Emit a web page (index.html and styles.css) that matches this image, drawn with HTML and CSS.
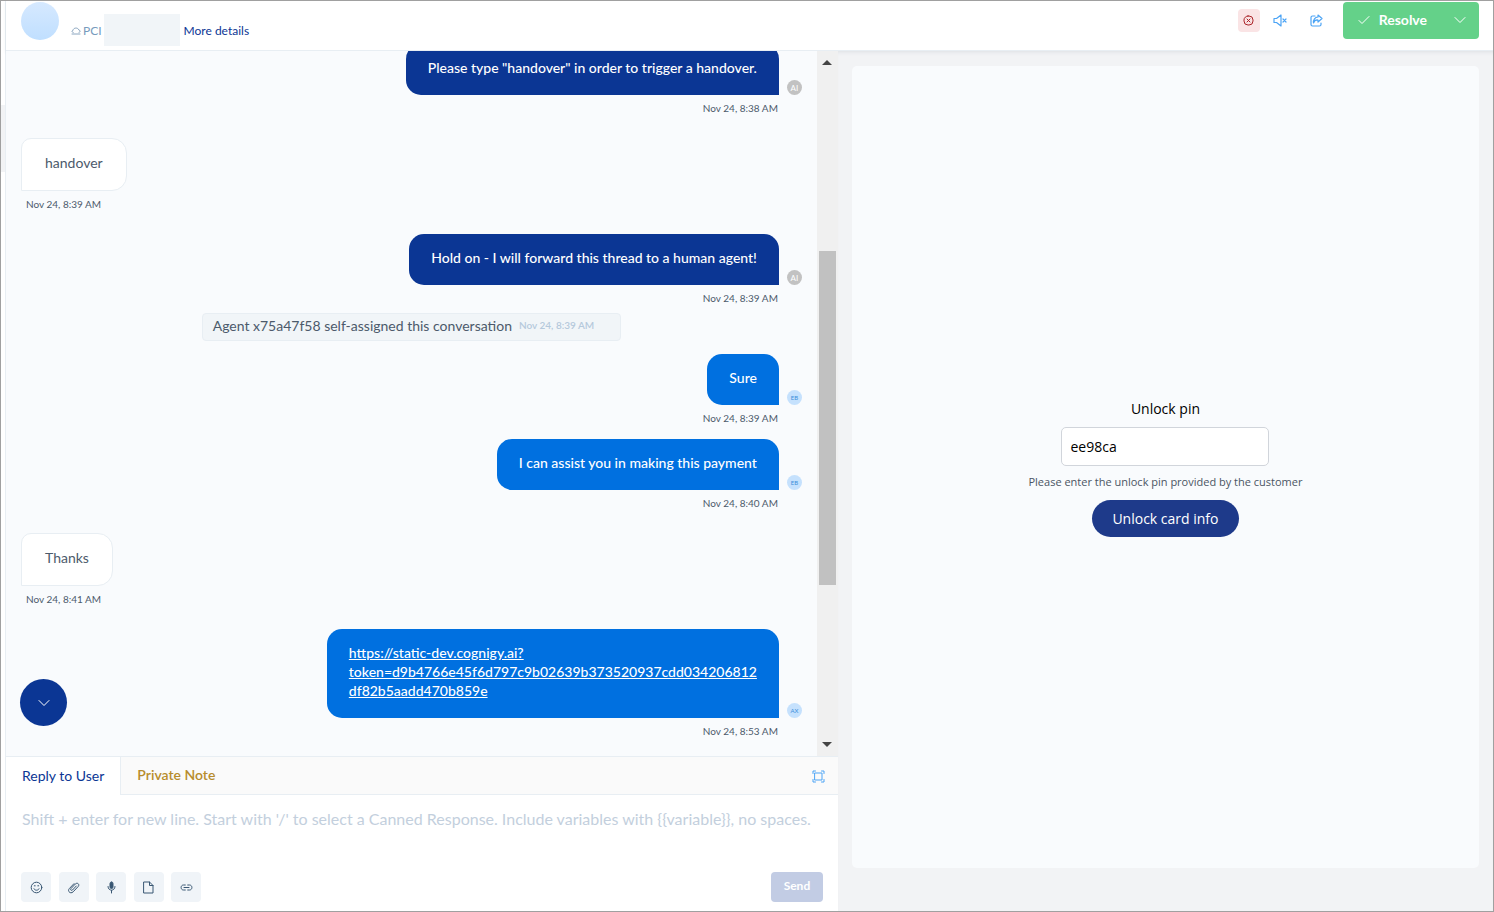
FILE: index.html
```
<!DOCTYPE html>
<html lang="en">
<head>
    <meta charset="UTF-8">
    <meta name="viewport" content="width=device-width, initial-scale=1.0">
    <title>Conversation</title>
    <link rel="stylesheet" href="styles.css">
</head>
<body>
    <div class="side-strip"><div class="side-item"></div></div>

    <div class="app">
        <header class="topbar">
            <div class="avatar"></div>
            <div class="contact">
                <svg class="cloud" width="10" height="8" viewBox="0 0 10 8"><path d="M1 7h8M2.200 5.500C.6 5.300.6 3.600 2 3.500c.2-3.100 5.200-3.200 5.800-.5C9.600 3.200 9.600 5.300 8 5.500"/></svg>
                <span class="inbox">PCI</span>
                <span class="redacted"></span>
                <a href="#details">More details</a>
            </div>

            <div class="actions">
                <button class="icon-btn danger" aria-label="Block">
                    <svg width="11" height="11" viewBox="0 0 11 11"><rect x="1" y="1" width="9" height="9" rx="4"/><path d="M4 4l3 3M7 4L4 7"/></svg>
                </button>
                <button class="icon-btn" aria-label="Mute">
                    <svg width="14" height="13" viewBox="0 0 14 13"><path d="M1 4.500h2.500L8 1v11L3.500 8.500H1zM10 5l3 3M13 5l-3 3"/></svg>
                </button>
                <button class="icon-btn" aria-label="Share">
                    <svg width="13" height="13" viewBox="0 0 13 13"><path d="M5 2H2.500Q1 2 1 3.500v7Q1 12 2.500 12h7q1.500 0 1.500-1.500V9"/><path d="M8 1l4 3.500L8 8V6C5.500 5.800 4 7 3.500 9 3 5.500 5 3.200 8 3z"/></svg>
                </button>
                <div class="resolve">
                    <button class="resolve-main">
                        <svg width="12" height="10" viewBox="0 0 12 10"><path d="M1 5.500L4 8.500 11 1.500"/></svg>
                        Resolve
                    </button>
                    <button class="resolve-more" aria-label="More resolve options">
                        <svg width="12" height="8" viewBox="0 0 12 8"><path d="M1 1.500l5 5 5-5"/></svg>
                    </button>
                </div>
            </div>
        </header>

        <main class="content">
            <section class="chat">
                <div class="conversation">
                    <div class="messages">
                        <div class="message out bot">
                            <div class="row"><p class="bubble">Please type "handover" in order to trigger a handover.</p><span class="badge">AI</span></div>
                            <time>Nov 24, 8:38 AM</time>
                        </div>
                        <div class="message in">
                            <p class="bubble">handover</p>
                            <time>Nov 24, 8:39 AM</time>
                        </div>
                        <div class="message out bot">
                            <div class="row"><p class="bubble">Hold on - I will forward this thread to a human agent!</p><span class="badge">AI</span></div>
                            <time>Nov 24, 8:39 AM</time>
                        </div>
                        <div class="activity">
                            <span>Agent x75a47f58 self-assigned this conversation</span>
                            <time>Nov 24, 8:39 AM</time>
                        </div>
                        <div class="message out">
                            <div class="row"><p class="bubble">Sure</p><span class="badge">EB</span></div>
                            <time>Nov 24, 8:39 AM</time>
                        </div>
                        <div class="message out grouped">
                            <div class="row"><p class="bubble">I can assist you in making this payment</p><span class="badge">EB</span></div>
                            <time>Nov 24, 8:40 AM</time>
                        </div>
                        <div class="message in">
                            <p class="bubble">Thanks</p>
                            <time>Nov 24, 8:41 AM</time>
                        </div>
                        <div class="message out">
                            <div class="row">
                                <p class="bubble"><a href="#payment">https://static-dev.cognigy.ai?<br>token=d9b4766e45f6d797c9b02639b373520937cdd034206812<br>df82b5aadd470b859e</a></p>
                                <span class="badge">AX</span>
                            </div>
                            <time>Nov 24, 8:53 AM</time>
                        </div>
                    </div>

                    <div class="scrollbar" aria-hidden="true">
                        <span class="arrow up"></span>
                        <div class="track"><div class="thumb"></div></div>
                        <span class="arrow down"></span>
                    </div>

                    <button class="to-bottom" aria-label="Scroll to bottom">
                        <svg width="12" height="8" viewBox="0 0 12 8"><path d="M1 1.500l5 5 5-5"/></svg>
                    </button>
                </div>

                <div class="reply">
                    <div class="tabs">
                        <button class="tab active">Reply to User</button>
                        <button class="tab note">Private Note</button>
                        <button class="expand" aria-label="Expand editor">
                            <svg width="13" height="13" viewBox="0 0 13 13"><path d="M3 3h7v7H3zM1 3.500V1h2.500M9.500 1H12v2.500M12 9.500V12H9.500M3.500 12H1V9.500"/></svg>
                        </button>
                    </div>
                    <textarea aria-label="Reply" placeholder="Shift + enter for new line. Start with '/' to select a Canned Response. Include variables with {{variable}}, no spaces."></textarea>
                    <div class="toolbar">
                        <div class="tools">
                            <button class="tool" aria-label="Emoji">
                                <svg width="13" height="13" viewBox="0 0 13 13"><circle cx="6.500" cy="6.500" r="5.300"/><path d="M4 7.800c1 2 4 2 5 0M4.300 4.800h.9M7.800 4.800h.9"/></svg>
                            </button>
                            <button class="tool" aria-label="Attach file">
                                <svg width="13" height="13" viewBox="0 0 13 13"><path d="M9.300 5L5.500 9C4.300 10 3 8.800 4 7.600L8.300 3c2-2 4.700.4 2.900 2.500l-5 5.300c-2.600 2.600-6.200-.5-3.900-3.200L7 2.600"/></svg>
                            </button>
                            <button class="tool" aria-label="Record audio">
                                <svg width="9" height="13" viewBox="0 0 9 13"><rect class="solid" x="3" y="1" width="3" height="6.500" rx="1.500"/><path d="M1 5.500c0 5 7 5 7 0M4.500 9.500V12"/></svg>
                            </button>
                            <button class="tool" aria-label="Canned response">
                                <svg width="11" height="13" viewBox="0 0 11 13"><path d="M1 1h5.500L10 4.500V12H1zM6.500 1v3.500H10"/></svg>
                            </button>
                            <button class="tool" aria-label="Insert link">
                                <svg width="13" height="9" viewBox="0 0 13 9"><path d="M5.300 2H3.500C.3 2 .3 7 3.500 7h1.800M7.700 2h1.800c3.200 0 3.200 5 0 5H7.700M4 4.500h5"/></svg>
                            </button>
                        </div>
                        <button class="send">Send</button>
                    </div>
                </div>
            </section>

            <aside class="panel">
                <form class="unlock-card">
                    <label for="pin">Unlock pin</label>
                    <input id="pin" type="text" value="ee98ca">
                    <p class="hint">Please enter the unlock pin provided by the customer</p>
                    <button type="button">Unlock card info</button>
                </form>
            </aside>
        </main>
    </div>
</body>
</html>
```
FILE: styles.css
```
:root {
    --navy: #0b3694;
    --blue: #0070e0;
    --green: #64d189;
    --sky: #4ca4f5;
    --line: #e8eef3;
    --surface: #f9fbfd;
    --panel: #f2f3f5;
    --text: #4c5a6b;
}

* {
    box-sizing: border-box;
    margin: 0;
    padding: 0;
}

body {
    display: flex;
    height: 100vh;
    border: 1px solid #a0a0a0;
    background: #fff;
    color: var(--text);
    font-family: Lato, sans-serif;
    font-size: 14px;
    line-height: 19px;
}

button,
input,
textarea {
    font: inherit;
    border: none;
    background: none;
}

button {
    display: flex;
    align-items: center;
    justify-content: center;
    cursor: pointer;
}

svg {
    fill: none;
    stroke: currentColor;
    stroke-linecap: round;
    stroke-linejoin: round;
}

.side-strip {
    width: 5px;
    padding-top: 104px;
    border-right: 1px solid var(--line);
}

.side-item {
    height: 67px;
    background: var(--panel);
}

.app {
    flex: 1;
    min-width: 0;
    display: flex;
    flex-direction: column;
}

/* Top bar */
.topbar {
    display: flex;
    align-items: flex-start;
    height: 50px;
    padding: 1px 14px 0 15px;
    border-bottom: 1px solid var(--line);
    box-shadow: 0 1px 4px rgba(40, 60, 80, 0.08);
}

.avatar {
    width: 38px;
    height: 38px;
    border-radius: 50%;
    background: linear-gradient(#d6e9ff, #c0dfff);
}

.contact {
    display: flex;
    align-items: center;
    height: 32px;
    margin: 12px 0 0 12px;
    font-size: 12px;
}

.cloud {
    margin: 2px 2px 0 0;
    color: #8aa5bf;
}

.inbox {
    color: #779bbd;
}

.redacted {
    width: 76px;
    height: 32px;
    margin: 0 4px 0 2px;
    background: #f1f5f8;
}

.contact a {
    color: var(--navy);
    text-decoration: none;
}

.actions {
    display: flex;
    align-items: center;
    gap: 15px;
    margin-left: auto;
}

.icon-btn {
    width: 22px;
    height: 23px;
    color: var(--sky);
}

.icon-btn svg {
    stroke-width: 1.2;
}

.icon-btn.danger {
    margin-right: -6px;
    border-radius: 4px;
    background: #fae4e5;
    color: #ab2328;
}

.icon-btn.danger svg {
    stroke-width: 1;
}

.resolve {
    display: flex;
    height: 37px;
    border-radius: 4px;
    background: var(--green);
}

.resolve button {
    padding-bottom: 2px;
    color: #fff;
    font-weight: 700;
}

.resolve .resolve-main {
    gap: 9px;
    padding-left: 15px;
}

.resolve-more {
    width: 38px;
    margin-left: 14px;
}

.content {
    flex: 1;
    min-height: 0;
    display: grid;
    grid-template-columns: 127fr 100fr;
}

/* Chat */
.chat {
    display: flex;
    flex-direction: column;
    min-width: 0;
    min-height: 0;
}

.conversation {
    position: relative;
    flex: 1;
    min-height: 0;
    display: flex;
    background: var(--surface);
}

.messages {
    flex: 1;
    display: flex;
    flex-direction: column;
    justify-content: flex-end;
    gap: 20px;
    padding: 0 15px 15px;
    overflow: hidden;
}

.message {
    display: flex;
    flex-direction: column;
    flex-shrink: 0;
    align-items: flex-start;
}

.message.out {
    align-items: flex-end;
}

.message.grouped {
    margin-top: -9px;
}

.row {
    display: flex;
    align-items: flex-end;
    gap: 8px;
}

.bubble {
    padding: 14px 22px 18px;
    border-radius: 15px 15px 0 15px;
    background: var(--blue);
    color: #fff;
    font-weight: 500;
}

.bubble a {
    color: #fff;
}

.bot .bubble {
    background: var(--navy);
}

.in .bubble {
    padding: 14px 23px 18px;
    border: 1px solid var(--line);
    border-radius: 10px 15px 15px 0;
    background: #fff;
    color: var(--text);
    font-weight: 400;
}

.message time {
    margin: 4px 24px 0 5px;
    font-size: 10px;
}

.badge {
    width: 15px;
    height: 15px;
    border-radius: 50%;
    background: #c5e1fd;
    color: #3d8fdb;
    font-size: 6px;
    line-height: 15px;
    text-align: center;
}

.bot .badge {
    background: #c2c2c2;
    color: #fff;
    font-size: 8px;
    line-height: 16px;
}

.activity {
    align-self: center;
    display: flex;
    align-items: center;
    flex-shrink: 0;
    gap: 7px;
    height: 28px;
    margin: -15px 0 -7px;
    padding: 0 26px 3px 10px;
    border: 1px solid var(--line);
    border-radius: 4px;
    background: #f1f5f8;
}

.activity time {
    color: #b5c9dc;
    font-size: 10px;
    font-weight: 600;
}

.scrollbar {
    display: flex;
    flex-direction: column;
    align-items: center;
    width: 21px;
    padding: 9px 0;
    background: #f0f0f0;
}

.arrow {
    border: 5px solid transparent;
}

.arrow.up {
    border-top: none;
    border-bottom-color: #444;
}

.arrow.down {
    border-bottom: none;
    border-top-color: #444;
}

.track {
    flex: 1;
    width: 17px;
    padding-top: 186px;
}

.thumb {
    height: 68%;
    background: #c1c1c1;
}

.to-bottom {
    position: absolute;
    left: 14px;
    bottom: 30px;
    width: 47px;
    height: 47px;
    border-radius: 50%;
    background: var(--navy);
    color: #fff;
}

/* Reply box */
.tabs {
    display: flex;
    height: 39px;
    border-top: 1px solid var(--line);
    border-bottom: 1px solid var(--line);
    background: #fafafa;
}

.tab {
    padding: 0 16px 2px;
}

.tab.active {
    margin-bottom: -1px;
    border-right: 1px solid var(--line);
    background: #fff;
    color: var(--navy);
}

.tab.note {
    color: #b78c2c;
    font-weight: 600;
}

.expand {
    margin-left: auto;
    padding: 2px 13px 0;
    color: var(--sky);
}

.reply textarea {
    display: block;
    width: 100%;
    height: 77px;
    padding: 14px 16px;
    font-size: 16px;
    resize: none;
    outline: none;
}

.reply textarea::placeholder {
    color: #c3cfdd;
}

.toolbar {
    display: flex;
    justify-content: space-between;
    padding: 0 15px 9px;
}

.tools {
    display: flex;
    justify-content: space-between;
    width: 180px;
}

.tool {
    width: 30px;
    height: 30px;
    border-radius: 4px;
    background: #f0f4f8;
    color: #395773;
}

.tool .solid {
    fill: currentColor;
}

.send {
    width: 52px;
    height: 30px;
    padding-bottom: 4px;
    border-radius: 4px;
    background: #c2cce4;
    color: #fff;
    font-size: 12px;
    font-weight: 700;
}

/* Unlock panel */
.panel {
    display: flex;
    padding: 15px 14px 43px;
    background: var(--panel);
    box-shadow: inset 0 4px 4px -3px rgba(40, 60, 80, 0.1);
}

.unlock-card {
    flex: 1;
    display: flex;
    flex-direction: column;
    align-items: center;
    justify-content: center;
    border-radius: 5px;
    background: var(--surface);
    color: #000;
    font-family: "Open Sans", "Noto Sans", sans-serif;
}

.unlock-card label {
    line-height: 24px;
}

.unlock-card input {
    width: 208px;
    height: 39px;
    margin: 6px 0;
    padding: 0 8px;
    border: 1px solid #d1d5db;
    border-radius: 5px;
    background: #fff;
}

.hint {
    margin-bottom: 8px;
    color: #4b5563;
    font-size: 11px;
    line-height: 20px;
}

.unlock-card button {
    height: 37px;
    padding: 0 20px;
    border-radius: 19px;
    background: #1e3a8a;
    color: #fff;
}
```
